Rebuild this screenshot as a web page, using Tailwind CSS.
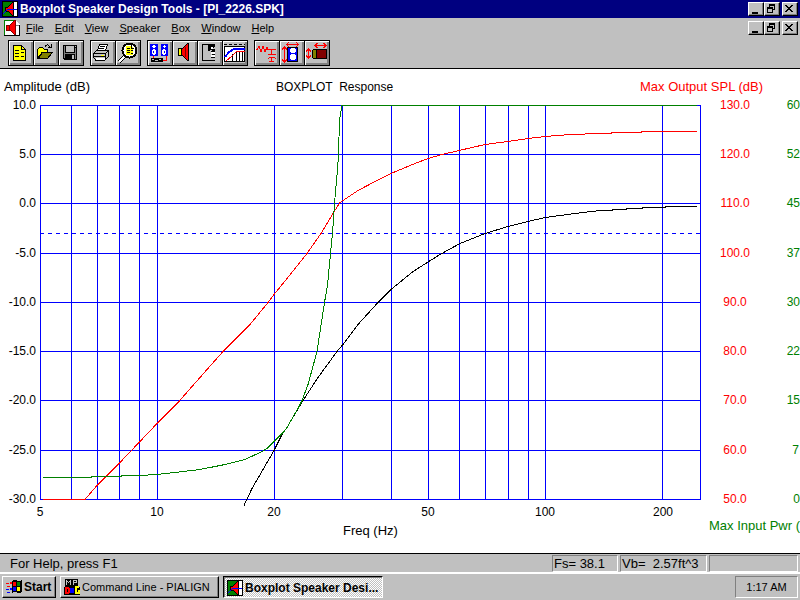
<!DOCTYPE html>
<html lang="en">
<head>
<meta charset="utf-8">
<meta name="viewport" content="width=device-width, initial-scale=1">
<title>Boxplot Speaker Design Tools - [PI_2226.SPK]</title>
<script src="https://cdn.jsdelivr.net/npm/@tailwindcss/browser@4"></script>
</head>
<body class="flex h-screen flex-col overflow-hidden bg-[#c0c0c0] font-['Liberation_Sans',Arial,sans-serif] text-[11px] leading-4 text-black">

<svg class="hidden" aria-hidden="true">
  <symbol id="app" viewBox="0 0 16 16">
    <rect width="16" height="16" fill="#000"/>
    <rect x="1" y="1" width="9" height="14" fill="#008000"/>
    <rect x="11" y="1" width="4" height="14" fill="#fff"/>
    <path d="M3 6h3l5-5v14l-5-5H3z" fill="#f00" stroke="#000" stroke-width="1"/>
    <path d="M1 13 5 9l5-1h5" fill="none" stroke="#00f" stroke-width="1"/>
  </symbol>
  <symbol id="min" viewBox="0 0 12 10"><path d="M3 8h6v2H3z"/></symbol>
  <symbol id="restore" viewBox="0 0 12 10"><path fill-rule="evenodd" d="M4 0h6v6H8v3H2V3h2zM5 2v1h3v2h1V2zM3 5v3h4V5z"/></symbol>
  <symbol id="close" viewBox="0 0 12 10"><path d="M2 1h2v1h1v1h2V2h1V1h2v1H9v1H8v1H7v1h1v1h1v1h1v1H8V7H7V6H5v1H4v1H2V7h1V6h1V5h1V4H4V3H3V2H2z"/></symbol>
</svg>

<header class="flex h-[18px] shrink-0 items-center gap-[2px] bg-[#000080] pr-[2px] pl-[2px] text-white">
  <svg class="size-4 shrink-0" shape-rendering="crispEdges"><use href="#app"/></svg>
  <h1 class="flex-1 truncate text-[12px] font-bold">Boxplot Speaker Design Tools - [PI_2226.SPK]</h1>
  <div class="flex text-black">
    <button aria-label="Minimize" class="h-[14px] w-4 border border-t-white border-r-black border-b-black border-l-white bg-[#c0c0c0] shadow-[inset_-1px_-1px_#808080]"><svg class="h-[10px] w-3" shape-rendering="crispEdges"><use href="#min"/></svg></button>
    <button aria-label="Restore" class="mr-[2px] h-[14px] w-4 border border-t-white border-r-black border-b-black border-l-white bg-[#c0c0c0] shadow-[inset_-1px_-1px_#808080]"><svg class="h-[10px] w-3" shape-rendering="crispEdges"><use href="#restore"/></svg></button>
    <button aria-label="Close" class="h-[14px] w-4 border border-t-white border-r-black border-b-black border-l-white bg-[#c0c0c0] shadow-[inset_-1px_-1px_#808080]"><svg class="h-[10px] w-3" shape-rendering="crispEdges"><use href="#close"/></svg></button>
  </div>
</header>

<div class="flex h-5 shrink-0 items-center pr-[2px] pl-1">
  <svg class="size-4 shrink-0" viewBox="0 0 16 16" shape-rendering="crispEdges" aria-hidden="true">
    <path d="M0 0h11l5 5v11H0z" fill="#fff"/><path d="M0 15V0h11" fill="none" stroke="#008000" stroke-width="2"/>
    <path d="M11 0v5h5" fill="#fff" stroke="#808080"/><path d="M2 5h4l5-5v15l-5-5H2z" fill="#f00" stroke="#800000"/>
    <path d="M5 5v6" stroke="#800000"/><path d="M0 15.500h16M15.500 5v11" stroke="#000"/>
  </svg>
  <nav class="flex flex-1 gap-[11px] pl-[6px] text-[11px]">
    <button><u>F</u>ile</button><button><u>E</u>dit</button><button><u>V</u>iew</button><button><u>S</u>peaker</button><button><u>B</u>ox</button><button><u>W</u>indow</button><button><u>H</u>elp</button>
  </nav>
  <div class="flex">
    <button aria-label="Minimize document" class="h-[14px] w-4 border border-t-white border-r-black border-b-black border-l-white bg-[#c0c0c0] shadow-[inset_-1px_-1px_#808080]"><svg class="h-[10px] w-3" shape-rendering="crispEdges"><use href="#min"/></svg></button>
    <button aria-label="Restore document" class="mr-[2px] h-[14px] w-4 border border-t-white border-r-black border-b-black border-l-white bg-[#c0c0c0] shadow-[inset_-1px_-1px_#808080]"><svg class="h-[10px] w-3" shape-rendering="crispEdges"><use href="#restore"/></svg></button>
    <button aria-label="Close document" class="h-[14px] w-4 border border-t-white border-r-black border-b-black border-l-white bg-[#c0c0c0] shadow-[inset_-1px_-1px_#808080]"><svg class="h-[10px] w-3" shape-rendering="crispEdges"><use href="#close"/></svg></button>
  </div>
</div>

<div role="toolbar" aria-label="Tools" class="flex h-[31px] shrink-0 items-start gap-[6px] border-b border-black pt-[2px] pl-2">
  <div class="flex gap-px border border-black bg-black">
    <button aria-label="New" class="size-6 bg-[#c0c0c0] shadow-[inset_1px_1px_#fff,inset_-2px_-2px_#808080]"><svg class="size-6" viewBox="9 41 24 24" shape-rendering="crispEdges">
      <path d="M13.500 45.500H21.500L25.500 49.500V60.500H13.500z" fill="#ff0" stroke="#000"/><path d="M21.500 45v4.500H26M15 50.500h4M21 52.500h3M15 53.500h4M15 56.500h4M21 56.500h3" fill="none" stroke="#000"/>
    </svg></button>
    <button aria-label="Open" class="size-6 bg-[#c0c0c0] shadow-[inset_1px_1px_#fff,inset_-2px_-2px_#808080]"><svg class="size-6" viewBox="34 41 24 24" shape-rendering="crispEdges">
      <path d="M37.500 58.500V49.500L39.500 47.500H42.500L44.500 49.500H47.500V52.500H42z" fill="#ff0" stroke="#000"/><path d="M38.500 58.500 42.500 52.500H52.500L47.500 58.500z" fill="#808000" stroke="#000"/><path d="M45 46.500 47.500 44.500 50.500 47.500M51.500 44v4M48 47.500h4" fill="none" stroke="#000"/>
    </svg></button>
    <button aria-label="Save" class="size-6 bg-[#c0c0c0] shadow-[inset_1px_1px_#fff,inset_-2px_-2px_#808080]"><svg class="size-6" viewBox="59 41 24 24" shape-rendering="crispEdges">
      <path d="M63 45h14v15H64l-1-1z" fill="#000"/><path d="M64 46h1v12h-1zM75 48h1v11h-1zM65 53h10v1H65z" fill="#808080"/><path d="M66 46h8v6h-8zM72 55h2v4h-2zM75 46h1v1h-1z" fill="#c0c0c0"/>
    </svg></button>
  </div>
  <div class="flex gap-px border border-black bg-black">
    <button aria-label="Print" class="size-6 bg-[#c0c0c0] shadow-[inset_1px_1px_#fff,inset_-2px_-2px_#808080]"><svg class="size-6" viewBox="91 41 24 24" shape-rendering="crispEdges">
      <path d="M97.500 50.500 99.500 44.500H107.500L105.500 50.500z" fill="#fff" stroke="#000"/><path d="M100 46.500h5M99 48.500h5" stroke="#000"/><path d="M93.500 53.500 96.500 50.500H108.500V56.500L105.500 59.500H95.500L93.500 57.500z" fill="#c0c0c0" stroke="#000"/><path d="M94 53.500h11.500V59M105.500 53.500 108.500 50.500M94 56.500h11" fill="none" stroke="#000"/><path d="M101 55h3v1h-3z" fill="#ff0"/><path d="M96 58h9v2h-9z" fill="#fff"/><path d="M95 60.500h10" stroke="#000"/>
    </svg></button>
    <button aria-label="Print preview" class="size-6 bg-[#c0c0c0] shadow-[inset_1px_1px_#fff,inset_-2px_-2px_#808080]"><svg class="size-6" viewBox="116 41 24 24" shape-rendering="crispEdges">
      <path d="m125 56-6 6" stroke="#000" stroke-width="4"/><path d="m125 56-6 6" stroke="#fff" stroke-width="2"/><circle cx="129.500" cy="50.500" r="7" fill="#fff" stroke="#000" stroke-width="2"/><path d="M126 46h5l2 2v7h-7z" fill="#ff0"/><path d="M131.500 45v3.500H134M127 48.500h3M127 50.500h3M131 50.500h2M127 52.500h3M131 53.500h2" fill="none" stroke="#000"/>
    </svg></button>
  </div>
  <div class="flex gap-px border border-black bg-black">
    <button aria-label="System" class="size-6 bg-[#c0c0c0] shadow-[inset_1px_1px_#fff,inset_-2px_-2px_#808080]"><svg class="size-6" viewBox="148 41 24 24" shape-rendering="crispEdges">
      <path d="M150 44h8v12h-8zM161 44h7v12h-7z" fill="#00f"/><path d="M153 45h2v3h-2zM152 46h4v1h-4zM164 45h1v3h-1zM163 46h3v1h-3z" fill="#fff"/><path d="M152 50h4v4h-4zM153 49h2v6h-2zM162 50h4v4h-4zM163 49h2v6h-2z" fill="#fff"/><path d="M153 51h1v2h-1zM164 51h1v2h-1z" fill="#00f"/><path d="M151 58h12v4h-12z"/><path d="M152 59h2v1h-2zM155 60h3v1h-3zM159 59h2v1h-2z" fill="#c0c0c0"/><path d="M153.500 56v2M166.500 56v4.500H163" fill="none" stroke="#f00"/>
    </svg></button>
    <button aria-label="Driver" class="size-6 bg-[#c0c0c0] shadow-[inset_1px_1px_#fff,inset_-2px_-2px_#808080]"><svg class="size-6" viewBox="173 41 24 24" shape-rendering="crispEdges">
      <path d="M181.500 49.500 187.500 43.500H188.500V60.500H187.500L181.500 54.500z" fill="#f00" stroke="#000"/><path d="M185.500 47v10" stroke="#800000"/><path d="M178.500 48.500h3v7h-3z" fill="#ff0" stroke="#000"/>
    </svg></button>
    <button aria-label="Enclosure" class="size-6 bg-[#c0c0c0] shadow-[inset_1px_1px_#fff,inset_-2px_-2px_#808080]"><svg class="size-6" viewBox="198 41 24 24" shape-rendering="crispEdges">
      <path d="M215 44.500H202.500V60.500H215" fill="none" stroke="#000"/><path d="M208 45h7v2h-1v1h-1v1h2v2h-3v-1h-4zM211 51h4v1h-4zM212 54h3v1h-3zM211 57h4v1h-4zM208 45h2v6h-2z"/><path d="M211 47h2v2h-2zM211 52h4v2h-4zM211 55h4v2h-4z" fill="#fff"/>
    </svg></button>
    <button aria-label="Response graph" class="size-6 bg-[#c0c0c0] shadow-[inset_1px_1px_#fff,inset_-2px_-2px_#808080]"><svg class="size-6" viewBox="223 41 24 24" shape-rendering="crispEdges">
      <path d="M224 46h21v16h-21z" fill="#fff"/><path d="M224 44.500h21" stroke="#000" stroke-dasharray="3 2"/><path d="M224 46.500h21M224.500 47v15M232.500 54v8M236.500 52v10M239.500 52v10M242.500 52v10M244.500 47v15M224 61.500h21" stroke="#000"/><path d="M225 57 229 52 234 49H245" fill="none" stroke="#00f" stroke-width="2"/><path d="m226 61 6-5 4-4 3-1h6" fill="none" stroke="#f00" stroke-width="1"/>
    </svg></button>
  </div>
  <div class="flex gap-px border border-black bg-black">
    <button aria-label="Crossover" class="size-6 bg-[#c0c0c0] shadow-[inset_1px_1px_#fff,inset_-2px_-2px_#808080]"><svg class="size-6" viewBox="255 41 24 24" shape-rendering="crispEdges">
      <path d="M256 49.500h1l2-3 2 5 2-5 2 5 2-4 1 2h8M271.500 49v5M268 54.500h8M268 58.500q3.500-3 8 0M271.500 57v5M269 61.500h5" fill="none" stroke="#f00"/>
    </svg></button>
    <button aria-label="Box size" class="size-6 bg-[#c0c0c0] shadow-[inset_1px_1px_#fff,inset_-2px_-2px_#808080]"><svg class="size-6" viewBox="280 41 24 24" shape-rendering="crispEdges">
      <path d="M287 47h11v15h-11z" fill="#000"/><path d="M288 48h9v13h-9z" fill="#00f"/><path d="M291 48h4v1h1v3h-1v1h-4v-1h-1v-3h1zM291 54h4v1h1v4h-1v1h-4v-1h-1v-4h1z" fill="#fff"/><path d="M287 44.500h11M289 42 287 44.500 289 47M296 42 298 44.500 296 47M284.500 47v15M282 49.500 284.500 47 287 49.500M282 59.500 284.500 62 287 59.500" fill="none" stroke="#f00"/>
    </svg></button>
    <button aria-label="Port size" class="size-6 bg-[#c0c0c0] shadow-[inset_1px_1px_#fff,inset_-2px_-2px_#808080]"><svg class="size-6" viewBox="305 41 24 24" shape-rendering="crispEdges">
      <path d="M314.500 49.500H326.500V58.500H314.500z" fill="#800000" stroke="#000"/><ellipse cx="314.500" cy="54" rx="2.500" ry="4.500" fill="#808000" stroke="#000"/><path d="M315 45.500h11M317.500 43 315 45.500 317.500 48M323.500 43 326 45.500 323.500 48M308.500 49v9M306 51.500 308.500 49 311 51.500M306 55.500 308.500 58 311 55.500" fill="none" stroke="#f00"/>
    </svg></button>
  </div>
</div>

<main class="min-h-0 flex-1 bg-white">
<svg class="block size-full" viewBox="0 69 800 484" preserveAspectRatio="xMinYMin meet" role="img" aria-label="BOXPLOT response chart">
  <g shape-rendering="crispEdges" fill="none" stroke="#00f">
    <path d="M40 105.500H701M40 154.500H701M40 203.500H701M40 253.500H701M40 302.500H701M40 351.500H701M40 400.500H701M40 450.500H701M40 499.500H701"/>
    <path d="M40.500 105V500M71.500 105V500M97.500 105V500M119.500 105V500M139.500 105V500M157.500 105V500M274.500 105V500M342.500 105V500M391.500 105V500M428.500 105V500M459.500 105V500M485.500 105V500M508.500 105V500M528.500 105V500M545.500 105V500M662.500 105V500M700.500 105V500"/>
    <path d="M40 233.500H701" stroke-dasharray="4 4"/>
    <path stroke="#000" d="M244 505.500 252 488.500 263 469.500 274 450.500 282 434.500 287 427.500 294 415.500 303 400.500 318 377.500 337 351.500 343 344.500 358 324.500 378 302.500 391 289.500 413 271.500 440 254.500 460 243.500 485 233.500 508 226.500 528 221.500 545 217.500 575 213.500 600 210.500H612L613 209.500H626L627 208.500H642L643 207.500H665L666 206.500H697"/>
    <path stroke="#f00" d="M43 499.500H85L97 485.500 119 463.500 139 442.500 157 423.500 178 402.500 200 377.500 223 351.500 250 324.500 268 302.500 274 294.500 287 278.500 307 253.500 321 233.500 333 213.500 340 202.500 343 200.500 358 190.500 377 180.500 391 173.500 410 165.500 428 158.500 442 154.500 459 150.500 485 144.500 508 141.500 528 138.500 545 136.500 570 134.500 600 133.500H611L612 132.500H641L642 131.500H697"/>
    <path stroke="#008000" d="M43 477.500H91L92 476.500H121L122 475.500H139L157 474.500 175 472.500 200 469.500 225 464.500 245 459.500 262 451.500 267 448.500 274 441.500 284 431.500 287 427.500 291 420.500 298 408.500 302 400.500 308 384.500 317 351.500 324.500 302.500 327.500 285.500 330.500 253.500 332.500 233.500 334.500 203.500 336.500 180.500 337.500 170.500 338.500 153.500 339.500 120.500 341.500 108.500 342 105.500H697"/>
  </g>
  <g class="font-['Liberation_Sans',Arial,sans-serif] text-[12px]">
    <text x="4" y="91" class="text-[13px]">Amplitude (dB)</text>
    <text x="276" y="91" xml:space="preserve">BOXPLOT  Response</text>
    <text x="343" y="535" class="text-[13px]">Freq (Hz)</text>
    <g text-anchor="end">
      <text x="36" y="109">10.0</text><text x="36" y="158">5.0</text><text x="36" y="207">0.0</text><text x="36" y="257">-5.0</text><text x="36" y="306">-10.0</text><text x="36" y="355">-15.0</text><text x="36" y="404">-20.0</text><text x="36" y="454">-25.0</text><text x="36" y="503">-30.0</text>
    </g>
    <g text-anchor="middle">
      <text x="40" y="516">5</text><text x="157" y="516">10</text><text x="274" y="516">20</text><text x="428" y="516">50</text><text x="545" y="516">100</text><text x="663" y="516">200</text>
    </g>
    <g fill="#f00">
      <text x="640" y="91" class="text-[13px]">Max Output SPL (dB)</text>
      <g text-anchor="middle">
        <text x="735" y="109">130.0</text><text x="735" y="158">120.0</text><text x="735" y="207">110.0</text><text x="735" y="257">100.0</text><text x="735" y="306">90.0</text><text x="735" y="355">80.0</text><text x="735" y="404">70.0</text><text x="735" y="454">60.0</text><text x="735" y="503">50.0</text>
      </g>
    </g>
    <g fill="#008000" text-anchor="end">
      <text x="800" y="109">60</text><text x="800" y="158">52</text><text x="800" y="207">45</text><text x="800" y="257">37</text><text x="800" y="306">30</text><text x="800" y="355">22</text><text x="800" y="404">15</text><text x="799" y="454">7</text><text x="800" y="503">0</text>
      <text x="800" y="530" class="text-[13px]">Max Input Pwr (</text>
    </g>
  </g>
</svg>
</main>

<div role="status" class="flex h-[19px] shrink-0 items-start gap-[2px] border-t border-black pt-px pr-[2px] pl-[10px] text-[13px]">
  <p class="flex-1 leading-[18px]">For Help, press F1</p>
  <p class="h-[17px] w-[66px] border border-t-[#808080] border-r-white border-b-white border-l-[#808080] pl-px leading-[15px] whitespace-pre">Fs= 38.1</p>
  <p class="h-[17px] w-[87px] border border-t-[#808080] border-r-white border-b-white border-l-[#808080] pl-px leading-[15px] whitespace-pre">Vb=  2.57ft^3</p>
  <p class="h-[17px] w-[89px] border border-t-[#808080] border-r-white border-b-white border-l-[#808080]"></p>
</div>

<footer class="flex h-[28px] shrink-0 items-center gap-1 border-t-2 border-white px-[2px] text-[12px]">
  <button class="flex h-[22px] w-[54px] items-center gap-[2px] border border-t-white border-r-black border-b-black border-l-white pl-[3px] font-bold shadow-[inset_-1px_-1px_#808080]">
    <svg class="size-4 shrink-0" viewBox="0 0 16 16" shape-rendering="crispEdges" aria-hidden="true">
      <path d="M6 2q4-2 6 0 2 1 4-1v12q-2 2-4 1-3-2-6 0z" fill="#000"/><path d="M7 3q2-1 3 0v4q-2-1-3 0zM0 4h3v1H0zM4 3h2v2H4zM1 7h3v1H1z" fill="#f00"/><path d="M11 3q2 1 3 0v4q-2 1-3 0z" fill="#008000"/><path d="M7 8q2-1 3 0v4q-2-1-3 0zM0 10h3v1H0zM4 9h2v2H4zM1 13h3v1H1z" fill="#00f"/><path d="M11 8q2 1 3 0v4q-2 1-3 0z" fill="#ff0"/>
    </svg>Start</button>
  <button class="flex h-[22px] w-[159px] items-center gap-[2px] border border-t-white border-r-black border-b-black border-l-white pl-[3px] text-[11px] shadow-[inset_-1px_-1px_#808080]">
    <svg class="size-4 shrink-0" viewBox="0 0 16 16" shape-rendering="crispEdges" aria-hidden="true">
      <path d="M1 0h13v8h2v8H0V8h1z"/><path d="M2.500 6V1.500l2 2 2-2V6M9.500 6V1.500h3v2h-3" fill="none" stroke="#c0c0c0"/><path d="M2 9v5h2l1-1v-3L4 9z" fill="none" stroke="#f00" stroke-width="2"/><path d="M7 10h2v3H7z" fill="none" stroke="#00f" stroke-width="2"/><path d="M15 8h-3v6h3v-3" fill="none" stroke="#ff0" stroke-width="2"/>
    </svg><span class="truncate">Command Line - PIALIGN</span></button>
  <button aria-pressed="true" class="flex h-[22px] w-[160px] items-center gap-[2px] border border-t-black border-r-white border-b-white border-l-black bg-[repeating-conic-gradient(#fff_0_25%,#c0c0c0_0_50%)] bg-size-[2px_2px] pt-px pl-[3px] font-bold shadow-[inset_1px_1px_#808080]">
    <svg class="size-4 shrink-0" shape-rendering="crispEdges"><use href="#app"/></svg><span class="truncate">Boxplot Speaker Desi...</span></button>
  <div class="ml-auto flex h-[22px] w-[63px] items-center justify-center border border-t-[#808080] border-r-white border-b-white border-l-[#808080] text-[11px]"><time>1:17 AM</time></div>
</footer>
</body>
</html>
